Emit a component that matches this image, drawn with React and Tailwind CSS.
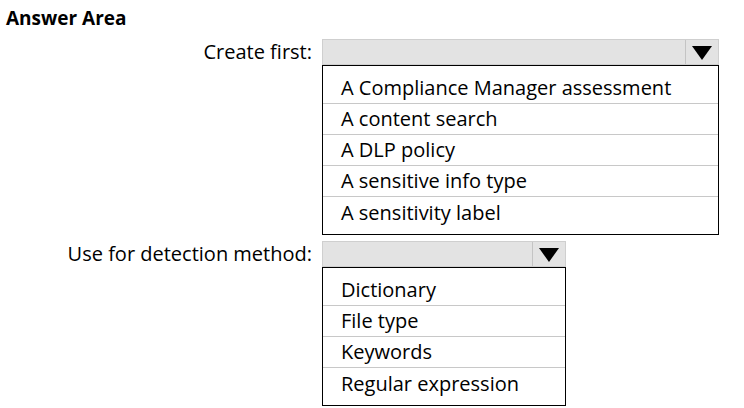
const questions = [
  {
    label: 'Create first:',
    width: 'w-[397px]',
    options: [
      'A Compliance Manager assessment',
      'A content search',
      'A DLP policy',
      'A sensitive info type',
      'A sensitivity label',
    ],
  },
  {
    label: 'Use for detection method:',
    width: 'w-[244px]',
    options: ['Dictionary', 'File type', 'Keywords', 'Regular expression'],
  },
];

function Caret() {
  return (
    <svg width="20" height="14" viewBox="0 0 20 14" className="block">
      <path d="M0 0 H20 L10 14 Z" fill="#000" />
    </svg>
  );
}

function Dropdown({ options, width }) {
  return (
    <div className={`${width} flex flex-col`}>
      {/* closed select bar */}
      <div className="flex h-[26px] border border-[#cfcfcf] bg-[#e3e3e3]">
        <div className="flex-1 border-r border-[#c4c4c4]" />
        <div className="flex w-[32px] items-center justify-center pt-[2px]">
          <Caret />
        </div>
      </div>
      {/* option list */}
      <div className="border border-black bg-white px-[18px] pt-[7px] pb-[6px]">
        {options.map((opt, i) => (
          <div
            key={opt}
            className={`-mx-[18px] flex h-[31px] items-center px-[18px] text-[20px] leading-none ${
              i < options.length - 1 ? 'border-b border-[#c8c8c8]' : ''
            }`}
          >
            {opt}
          </div>
        ))}
      </div>
    </div>
  );
}

export default function App() {
  return (
    <div
      className="h-[408px] w-[744px] bg-white text-black"
      style={{ fontFamily: '"Open Sans", "Noto Sans", sans-serif' }}
    >
      <h1 className="pl-[6px] pt-[7px] text-[19px] font-bold leading-[22px]">Answer Area</h1>
      <div className="mt-[10px] flex flex-col gap-[6px]">
        {questions.map((q) => (
          <div key={q.label} className="flex items-start">
            <div className="w-[322px] pr-[10px] text-right text-[20px] leading-[26px]">{q.label}</div>
            <Dropdown options={q.options} width={q.width} />
          </div>
        ))}
      </div>
    </div>
  );
}
